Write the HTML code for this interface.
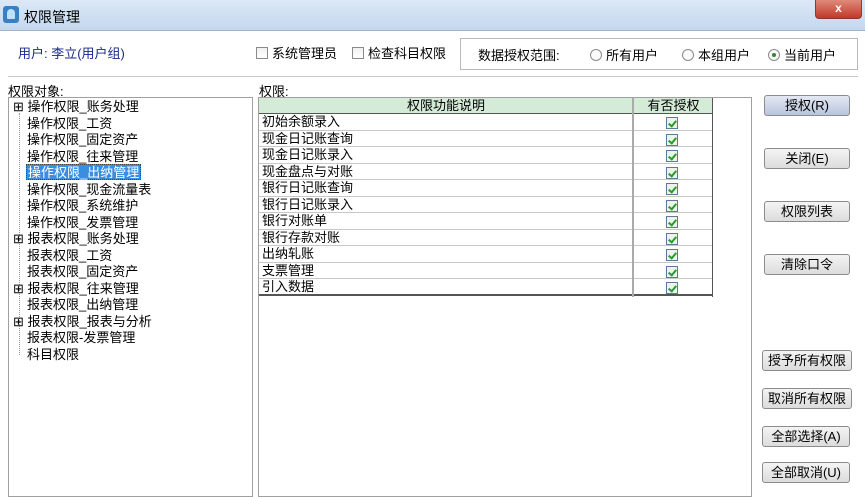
<!DOCTYPE html>
<html><head><meta charset="utf-8"><style>
*{margin:0;padding:0;box-sizing:border-box}
body{width:865px;height:495px;overflow:hidden;background:#fff;position:relative;font-family:"Liberation Sans","Noto Sans CJK SC",sans-serif;font-size:13px;color:#000}
.a{position:absolute;white-space:nowrap}
.title{left:0;top:0;width:865px;height:31px;background:linear-gradient(#dbe8f6,#c4d8ee);border-bottom:1px solid #9fb4cc}
.cb{display:inline-block;width:12px;height:12px;border:1px solid #8a8a8a;background:linear-gradient(#f0f0f0,#fff);vertical-align:-1px;margin-right:4px}
.rd{display:inline-block;width:12px;height:12px;border:1px solid #8a8a8a;border-radius:50%;background:#fafafa;vertical-align:-1px;margin-right:4px;position:relative}
.rd.on::after{content:"";position:absolute;left:3px;top:3px;width:4px;height:4px;border-radius:50%;background:#2a8a2a}
.box{border:1px solid #a0a0a0;background:#fff}
.btn{position:absolute;left:764px;width:86px;height:21px;border:1px solid #8c8c8c;border-radius:3px;background:linear-gradient(#f4f4f4,#dcdcdc);text-align:center;line-height:19px;font-size:13px}
.tr{position:absolute;left:27px;font-size:13px;line-height:16px;height:16px}
.row{position:absolute;left:259px;width:454px;height:16.5px;border-bottom:1px solid #c8c8c8;font-size:13px;line-height:16px;padding-left:3px}
.ck{position:absolute;left:666px;width:12px;height:12px;border:1px solid #5a7a9a;background:#eaf4ea}
.ck::after{content:"";position:absolute;left:3px;top:1px;width:3px;height:6px;border:solid #2a9a2a;border-width:0 2px 2px 0;transform:rotate(40deg)}
</style></head><body>
<div class="a title"></div>
<div class="a" style="left:3px;top:6px;width:16px;height:17px;background:#3a7fc0;border-radius:3px"></div>
<div class="a" style="left:7px;top:9px;width:8px;height:10px;background:#bfe0f8;border-radius:4px 4px 1px 1px"></div>
<div class="a" style="left:24px;top:7px;font-size:14px">权限管理</div>
<div class="a" style="left:815px;top:0;width:47px;height:19px;background:linear-gradient(#e08a7a,#c0392b);border:1px solid #8a3a30;border-top:none;border-radius:0 0 4px 4px;color:#fff;text-align:center;font-weight:bold;font-size:12px;line-height:17px">x</div>

<div class="a" style="left:18px;top:43px;color:#1a2a8a">用户: 李立(用户组)</div>
<div class="a" style="left:256px;top:43px"><span class="cb"></span>系统管理员</div>
<div class="a" style="left:352px;top:43px"><span class="cb"></span>检查科目权限</div>
<div class="a" style="left:460px;top:38px;width:398px;height:32px;border:1px solid #b8b8b8"></div>
<div class="a" style="left:478px;top:45px">数据授权范围:</div>
<div class="a" style="left:590px;top:45px"><span class="rd"></span>所有用户</div>
<div class="a" style="left:682px;top:45px"><span class="rd"></span>本组用户</div>
<div class="a" style="left:768px;top:45px"><span class="rd on"></span>当前用户</div>
<div class="a" style="left:8px;top:76px;width:850px;height:1px;background:#c8c8c8"></div>

<div class="a" style="left:8px;top:81px">权限对象:</div>
<div class="a" style="left:259px;top:81px">权限:</div>
<div class="a box" style="left:8px;top:97px;width:245px;height:400px"></div>
<div class="a box" style="left:258px;top:97px;width:494px;height:400px"></div>

<div class="a" style="left:19px;top:113px;width:0;height:242px;border-left:1px dotted #999"></div>
<div class="tr" style="top:99px;left:13px">⊞ 操作权限_账务处理</div>
<div class="tr" style="top:115.5px">操作权限_工资</div>
<div class="tr" style="top:132px">操作权限_固定资产</div>
<div class="tr" style="top:148.5px">操作权限_往来管理</div>
<div class="tr" style="top:164px;background:#3a8ee0;color:#fff;border:1px dotted #444;padding:0 1px;left:26px">操作权限_出纳管理</div>
<div class="tr" style="top:181.5px">操作权限_现金流量表</div>
<div class="tr" style="top:198px">操作权限_系统维护</div>
<div class="tr" style="top:214.5px">操作权限_发票管理</div>
<div class="tr" style="top:231px;left:13px">⊞ 报表权限_账务处理</div>
<div class="tr" style="top:247.5px">报表权限_工资</div>
<div class="tr" style="top:264px">报表权限_固定资产</div>
<div class="tr" style="top:280.5px;left:13px">⊞ 报表权限_往来管理</div>
<div class="tr" style="top:297px">报表权限_出纳管理</div>
<div class="tr" style="top:313.5px;left:13px">⊞ 报表权限_报表与分析</div>
<div class="tr" style="top:330px">报表权限-发票管理</div>
<div class="tr" style="top:346.5px">科目权限</div>

<div class="a" style="left:259px;top:98px;width:454px;height:16px;background:#d4ebd8;border-bottom:1px solid #555"></div>
<div class="a" style="left:259px;top:98px;width:374px;text-align:center;line-height:16px">权限功能说明</div>
<div class="a" style="left:634px;top:98px;width:79px;text-align:center;line-height:16px">有否授权</div>
<div class="row" style="top:114px">初始余额录入</div>
<div class="row" style="top:130.5px">现金日记账查询</div>
<div class="row" style="top:147px">现金日记账录入</div>
<div class="row" style="top:163.5px">现金盘点与对账</div>
<div class="row" style="top:180px">银行日记账查询</div>
<div class="row" style="top:196.5px">银行日记账录入</div>
<div class="row" style="top:213px">银行对账单</div>
<div class="row" style="top:229.5px">银行存款对账</div>
<div class="row" style="top:246px">出纳轧账</div>
<div class="row" style="top:262.5px">支票管理</div>
<div class="row" style="top:279px;border-bottom:2px solid #555">引入数据</div>
<div class="a" style="left:632px;top:98px;width:2px;height:199px;background:#aaa"></div>
<div class="a" style="left:712px;top:98px;width:1px;height:199px;background:#555"></div>
<div class="ck" style="top:117px"></div><div class="ck" style="top:133.5px"></div><div class="ck" style="top:150px"></div><div class="ck" style="top:166.5px"></div><div class="ck" style="top:183px"></div><div class="ck" style="top:199.5px"></div><div class="ck" style="top:216px"></div><div class="ck" style="top:232.5px"></div><div class="ck" style="top:249px"></div><div class="ck" style="top:265.5px"></div><div class="ck" style="top:282px"></div>

<div class="btn" style="top:95px;background:linear-gradient(#e4e8f4,#b8c4dc)">授权(R)</div>
<div class="btn" style="top:148px">关闭(E)</div>
<div class="btn" style="top:201px">权限列表</div>
<div class="btn" style="top:254px">清除口令</div>
<div class="btn" style="top:350px;left:762px;width:90px">授予所有权限</div>
<div class="btn" style="top:388px;left:762px;width:90px">取消所有权限</div>
<div class="btn" style="top:426px;left:762px;width:88px">全部选择(A)</div>
<div class="btn" style="top:462px;left:762px;width:88px">全部取消(U)</div>
</body></html>
